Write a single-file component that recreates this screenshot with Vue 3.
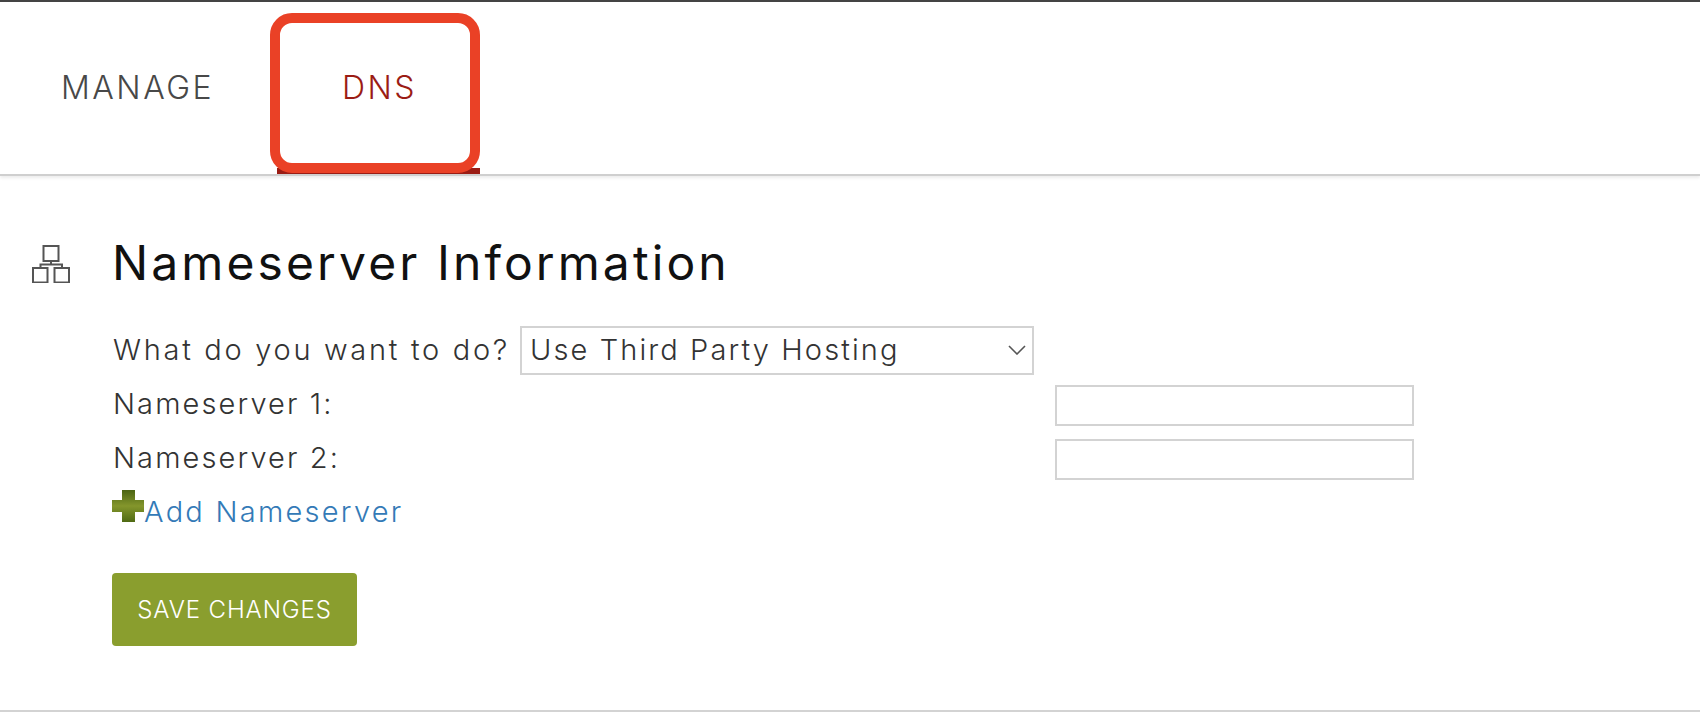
<script setup>
const nameservers = ['Nameserver 1:', 'Nameserver 2:']
</script>

<template>
  <div class="page">
    <nav class="tabs">
      <a class="tab">MANAGE</a>
      <a class="tab active">DNS<span class="callout"></span></a>
    </nav>

    <section class="content">
      <svg class="section-icon" width="38" height="38" viewBox="0 0 38 38" fill="none" stroke="#555" stroke-width="2">
        <rect x="11.5" y="1" width="15" height="15" />
        <rect x="1" y="23" width="14.5" height="14.5" />
        <rect x="22.5" y="23" width="14.5" height="14.5" />
        <path d="M19 16V19.5M8.5 23V19.5H30V23" />
      </svg>
      <div class="main">
        <h2>Nameserver Information</h2>
        <div class="row">
          <label class="question">What do you want to do?</label>
          <div class="select">
            <span>Use Third Party Hosting</span>
            <svg width="18" height="10" viewBox="0 0 18 10" fill="none" stroke="#555" stroke-width="1.6">
              <path d="M1 1L9 9L17 1" />
            </svg>
          </div>
        </div>
        <div class="row ns-row" v-for="ns in nameservers" :key="ns">
          <label>{{ ns }}</label>
          <input type="text" />
        </div>
        <div class="add-row">
          <svg class="plus" width="32" height="32" viewBox="0 0 32 32">
            <defs>
              <linearGradient id="plusFill" x1="0" y1="0" x2="0" y2="1">
                <stop offset="0" stop-color="#4a6312" />
                <stop offset="0.5" stop-color="#84962c" />
                <stop offset="1" stop-color="#4f6a14" />
              </linearGradient>
            </defs>
            <path d="M10 0H23V10H32V22H23V32H10V22H0V10H10Z" fill="url(#plusFill)" />
          </svg>
          <a class="add-link">Add Nameserver</a>
        </div>
        <button class="save">SAVE CHANGES</button>
      </div>
    </section>
    <div class="footer-line"></div>
  </div>
</template>

<style>
body {
  margin: 0;
  background: #fff;
}
</style>

<style scoped>
.page {
  width: 1700px;
  height: 720px;
  overflow: hidden;
  font-family: Inter, "Liberation Sans", sans-serif;
  color: #333;
  border-top: 2px solid #444;
  box-sizing: border-box;
  display: flex;
  flex-direction: column;
}

.tabs {
  height: 174px;
  flex: none;
  display: flex;
  box-sizing: border-box;
  border-bottom: 2px solid #cfcfcf;
  box-shadow: 0 2px 3px rgba(0, 0, 0, 0.08);
  padding-left: 61px;
}
.tab {
  flex: none;
  width: 216px;
  font-size: 32px;
  font-weight: 300;
  letter-spacing: 2.5px;
  color: #484848;
  padding-top: 68px;
  line-height: 36px;
  box-sizing: border-box;
}
.tab.active {
  position: relative;
  width: 203px;
  padding-left: 65px;
  color: #9b1c14;
  border-bottom: 6px solid #9b1c14;
  height: 172px;
}
.callout {
  position: absolute;
  left: -7px;
  top: 11px;
  width: 210px;
  height: 160px;
  box-sizing: border-box;
  border: 10px solid #ea4126;
  border-radius: 22px;
}

.content {
  flex: 1;
  display: flex;
  padding: 60px 0 0 32px;
}
.section-icon {
  flex: none;
  margin: 9px 42px 0 0;
}
.main {
  flex: 1;
  margin-top: -3px;
}
h2 {
  margin: 0 0 30px;
  font-size: 48px;
  font-weight: 400;
  line-height: 60px;
  letter-spacing: 3.1px;
  color: #111;
}
.row {
  display: flex;
  align-items: center;
  height: 54px;
  font-size: 29px;
  font-weight: 300;
  letter-spacing: 2.1px;
  color: #333;
}
.row label {
  width: 408px;
  flex: none;
  padding: 0 0 2px 1px;
  box-sizing: border-box;
}
.row .question {
  letter-spacing: 2.7px;
  white-space: nowrap;
}
.select {
  width: 514px;
  height: 49px;
  box-sizing: border-box;
  border: 2px solid #d3d3d3;
  display: flex;
  align-items: center;
  justify-content: space-between;
  padding: 0 6px 0 8px;
}
.select span {
  padding-bottom: 2px;
}
.row.ns-row label {
  width: 943px;
}
.ns-row input {
  width: 359px;
  height: 41px;
  box-sizing: border-box;
  border: 2px solid #d3d3d3;
  background: #fff;
  outline: none;
  padding: 0;
  margin-top: 2px;
}
.add-row {
  display: flex;
  align-items: flex-start;
  height: 54px;
}
.plus {
  flex: none;
  margin-top: 5px;
  filter: blur(0.6px);
}
.add-link {
  font-size: 29px;
  font-weight: 300;
  letter-spacing: 2.25px;
  color: #337ab7;
  line-height: 44px;
  margin-top: 5px;
}
.save {
  display: block;
  margin-top: 34px;
  width: 245px;
  height: 73px;
  border: none;
  border-radius: 4px;
  background: #8a9e2e;
  color: #fff;
  font-family: Inter, "Liberation Sans", sans-serif;
  font-size: 24px;
  font-weight: 300;
  letter-spacing: 0.9px;
  padding: 0;
}
.footer-line {
  flex: none;
  height: 2px;
  background: #d3d3d3;
  margin-bottom: 8px;
}
</style>
